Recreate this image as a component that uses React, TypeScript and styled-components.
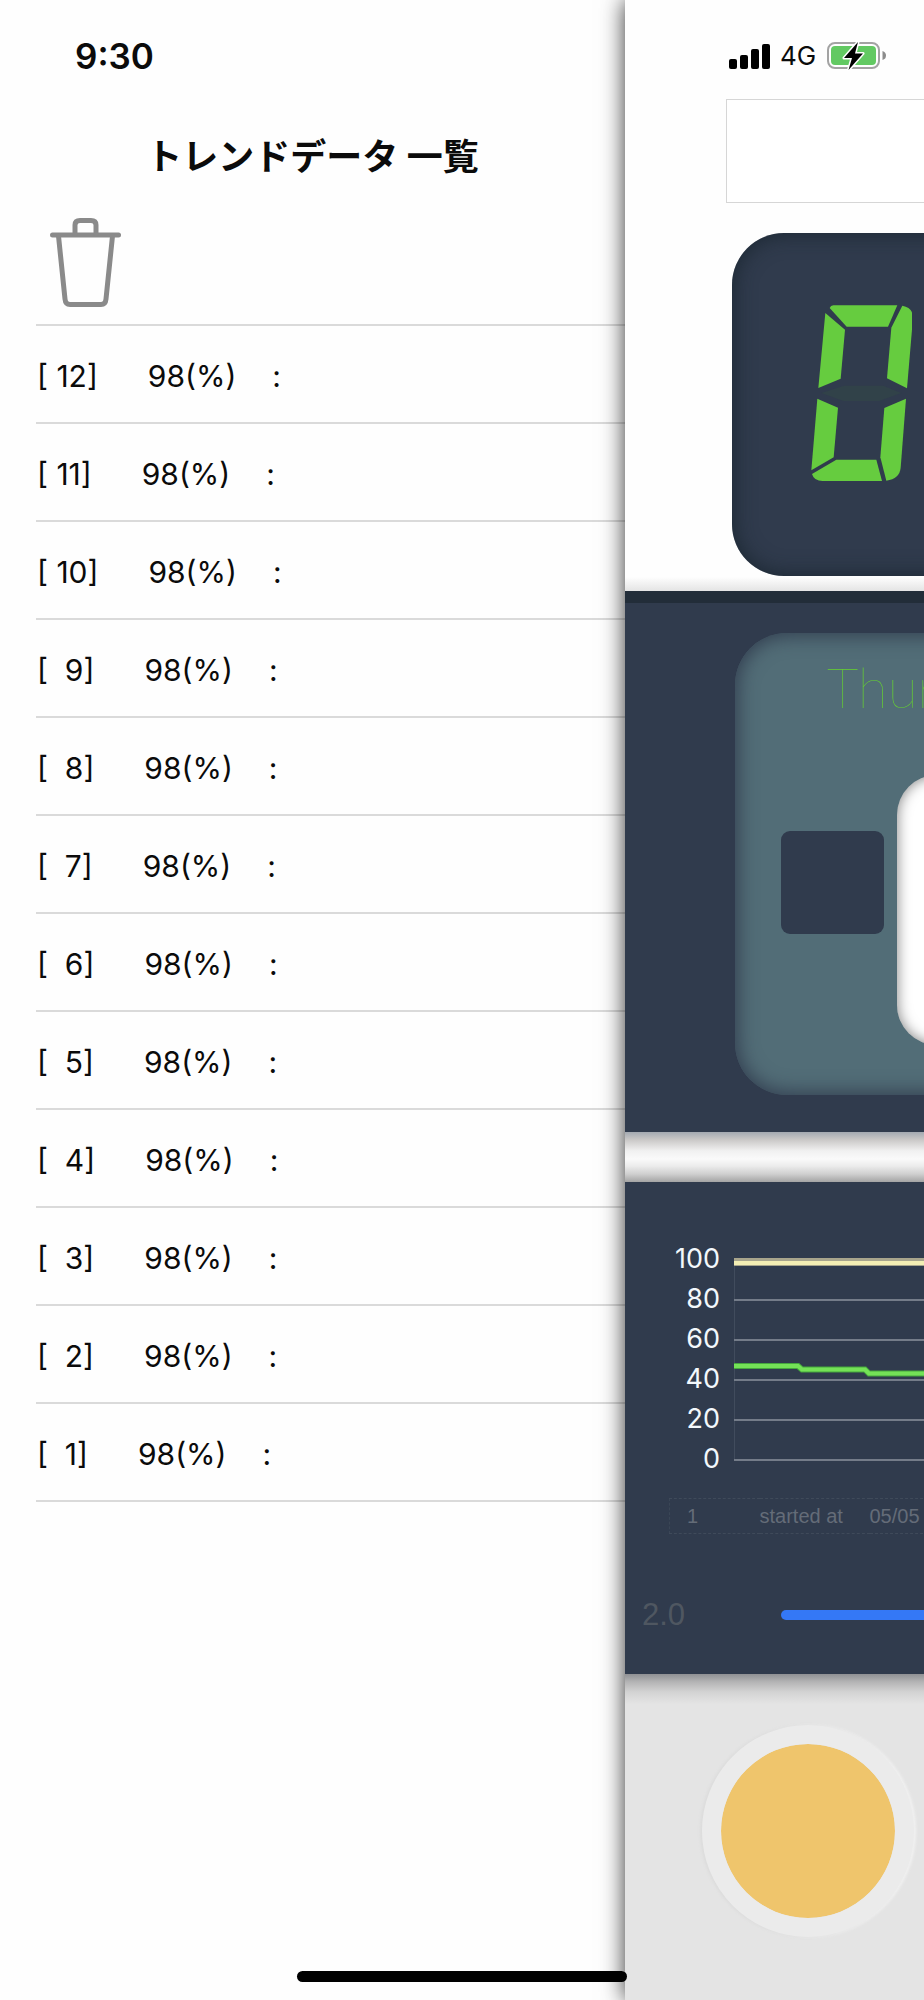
import React from "react";
import styled, { createGlobalStyle } from "styled-components";

const navy = "#303b4d";
const green = "#66cc3f";

const GlobalStyle = createGlobalStyle`
  *, *::before, *::after { box-sizing: border-box; }
  body {
    margin: 0;
    background: #fefefe;
    color: #0b0b0b;
    font-family: Inter, "Noto Sans CJK JP", sans-serif;
  }
`;

const Screen = styled.div`
  position: relative;
  display: flex;
  min-height: 100vh;
  overflow: hidden;
`;

/* Drawer with the trend list */
const Drawer = styled.aside`
  flex: 1;
  min-width: 0;
  padding: 34px 0 0 36px;
  background: #fefefe;
`;

const Clock = styled.time`
  display: block;
  padding-left: 39px;
  font-size: 35px;
  font-weight: 600;
  line-height: 44px;
`;

const Title = styled.h1`
  margin: 54px 36px 0 0;
  font-size: 36px;
  font-weight: 700;
  line-height: 50px;
  text-align: center;
  white-space: nowrap;
`;

const IconButton = styled.button`
  display: block;
  margin: 33px 0 0 12px;
  padding: 0;
  border: 0;
  background: none;
  line-height: 0;
`;

const TrendList = styled.ol`
  margin: 14px 0 0;
  padding: 0;
  list-style: none;
  border-top: 2px solid #dadada;
`;

const TrendRow = styled.li`
  display: flex;
  align-items: center;
  height: 98px;
  padding: 3px 0 0 1px;
  border-bottom: 2px solid #dadada;
  font-size: 30px;
  line-height: 40px;
  white-space: pre;
`;

const TrendValue = styled.span`
  margin: 0 36px 0 50px;
`;

/* Main page, slid to the right of the drawer */
const Page = styled.main`
  position: relative;
  flex: 0 0 299px;
  display: flex;
  flex-direction: column;
  min-width: 0;
  overflow: hidden;
  background: #e4e4e4;
`;

const PageFrame = styled.div`
  position: relative;
  display: flex;
  box-shadow: 0 0 22px rgba(0, 0, 0, 0.8);
`;

const Top = styled.header`
  width: 100vw;
  height: 591px;
  padding: 40px 0 0 101px;
  background: linear-gradient(to top, #e4e4e4, #fefefe 14px);
`;

const StatusIcons = styled.div`
  display: flex;
  align-items: center;
  height: 32px;
  padding-left: 3px;
  font-size: 26px;
  line-height: 32px;
`;

const Network = styled.span`
  margin: 0 11px 0 9px;
`;

const MessageBox = styled.input`
  display: block;
  width: calc(100vw - 202px);
  height: 104px;
  margin-top: 27px;
  padding: 0 16px;
  border: 1px solid #d6d6d6;
  background: #fff;
  font: inherit;
`;

const Lcd = styled.div`
  width: calc(100vw - 214px);
  height: 343px;
  margin: 30px 0 0 6px;
  padding: 70px 0 0 76px;
  border-radius: 52px;
  background: ${navy};
  box-shadow: inset 0 0 22px rgba(20, 32, 40, 0.8);
`;

const DateSection = styled.section`
  width: 100vw;
  height: 541px;
  padding: 30px 110px 0;
  border-top: 12px solid #222d39;
  background: ${navy};
`;

const DateCard = styled.div`
  height: 462px;
  padding: 21px 46px 0;
  border-radius: 52px;
  background: #526d77;
  box-shadow: inset 0 0 20px 2px ${navy};
`;

const Weekday = styled.h2`
  margin: 0 0 0 46px;
  color: #66d42f;
  font-family: Lato, Roboto, sans-serif;
  font-size: 55px;
  font-weight: 100;
  line-height: 66px;
  white-space: nowrap;
`;

const DateBody = styled.div`
  display: flex;
  align-items: center;
  gap: 13px;
  height: 270px;
  margin-top: 55px;
`;

const Tile = styled.div`
  flex: 0 0 103px;
  height: 103px;
  margin-bottom: 56px;
  border-radius: 9px;
  background: ${navy};
`;

const Face = styled.div`
  flex: 1;
  height: 270px;
  border-radius: 40px;
  background: #fff;
  box-shadow: inset 0 0 14px rgba(0, 0, 0, 0.5);
`;

const Divider = styled.div`
  height: 50px;
  background: linear-gradient(#a3a9b1, #cbc9c8 8px, #f1f1f1 19px, #fafafa 27px, #ececec 34px, #cfcfcf 42px, #a4a4a4);
`;

const ChartSection = styled.section`
  width: 100vw;
  height: 492px;
  padding: 57px 0 0 17px;
  background: ${navy};
`;

const Chart = styled.div`
  display: flex;
  align-items: flex-start;
  gap: 14px;
`;

const Axis = styled.ul`
  width: 78px;
  margin: 0;
  padding: 0;
  list-style: none;
  color: #f3f8fc;
  font-size: 27px;
  line-height: 40px;
  text-align: right;
`;

const Plot = styled.svg`
  display: block;
  flex: none;
`;

const Log = styled.table`
  width: 700px;
  margin: 19px 0 0 27px;
  border-collapse: collapse;
  table-layout: fixed;
  border-top: 1px dashed #3f4a5a;
  border-bottom: 1px dashed #3f4a5a;
  border-left: 1px dashed #3a4656;
  color: #646c78;
  font-family: "Liberation Sans", sans-serif;
  font-size: 20px;
  line-height: 34px;
`;

const LogCell = styled.td<{ $width?: number; $indent?: number }>`
  width: ${(p) => (p.$width ? `${p.$width}px` : "auto")};
  padding: 0 0 0 ${(p) => p.$indent ?? 0}px;
  white-space: nowrap;
`;

const SliderRow = styled.div`
  display: flex;
  align-items: center;
  height: 40px;
  margin-top: 61px;
`;

const SliderLabel = styled.label`
  width: 139px;
  color: #4f5761;
  font-family: "Liberation Sans", sans-serif;
  font-size: 31px;
  line-height: 40px;
`;

const Slider = styled.input`
  appearance: none;
  width: calc(100vw - 300px);
  height: 10px;
  margin: 0;
  border-radius: 5px;
  background: #3478f6;

  &::-webkit-slider-thumb {
    appearance: none;
    width: 40px;
    height: 40px;
    border-radius: 50%;
    background: #fff;
  }
`;

const Controls = styled.footer`
  flex: 1;
  width: 100vw;
  padding: 51px 0 0 77px;
  background: linear-gradient(#8f9094, #b4b4b5 8px, #d3d3d3 18px, #e4e4e4 30px);
`;

const RoundButton = styled.button`
  display: block;
  width: 212px;
  height: 212px;
  padding: 0;
  border: 19px solid #ebebeb;
  border-radius: 50%;
  background: #efc56c;
  background-clip: padding-box;
  box-shadow: -2px 0 3px #dcdcdc, 2px 0 3px #f2f2f2;
`;

const HomeBar = styled.div`
  position: absolute;
  bottom: 18px;
  left: 50%;
  width: 330px;
  height: 11px;
  margin-left: -165px;
  border-radius: 6px;
  background: #000;
`;

const TrashIcon = () => (
  <svg width="76" height="95" viewBox="0 0 76 95" fill="none" stroke="#8a8a8a" strokeWidth="5" strokeLinecap="round" strokeLinejoin="round" aria-hidden="true">
    <path d="M4.500 20H70.500" />
    <path d="M27 19V10Q27 5.500 32 5.500H43Q48 5.500 48 10V19" />
    <path d="M10.500 21L17 84Q17.500 89.500 22 89.500H53Q57.500 89.500 58 84L64.500 21" />
  </svg>
);

const SignalIcon = () => (
  <svg width="42" height="26" viewBox="0 0 42 26" fill="#000" aria-hidden="true">
    <rect x="0" y="16" width="8" height="10" rx="2" />
    <rect x="11" y="12" width="8" height="14" rx="2" />
    <rect x="22" y="6" width="8" height="20" rx="2" />
    <rect x="33" y="1" width="8" height="25" rx="2" />
  </svg>
);

const BatteryIcon = () => (
  <svg width="60" height="30" viewBox="0 0 60 30" aria-hidden="true">
    <rect x="1" y="2" width="51" height="25" rx="7" fill="none" stroke="#a3a3a3" strokeWidth="2" />
    <rect x="4" y="5" width="45" height="19" rx="4" fill="#62c962" />
    <path d="M55.500 10Q59 11 59 14.500T55.500 19Z" fill="#8c8c8c" />
    <path d="M31 1L17 17H25L21.500 29L36 12.500H28Z" fill="#000" stroke="#fff" strokeWidth="3" paintOrder="stroke" strokeLinejoin="round" />
  </svg>
);

/* A slanted seven-segment zero; the middle bar is unlit. */
const SegmentZero = () => (
  <svg width="104" height="180" viewBox="0 0 312 540" fill={green} role="img" aria-label="0">
    <path d="M65 15Q68 7 76 7H268L240 71H116Z" />
    <path d="M52 30L111 80L98 227L31 255Z" />
    <path d="M283 8Q315 14 315 44L297 256L237 226L250 74Z" />
    <path d="M28 287L90 314L77 463L10 502Z" />
    <path d="M294 287L229 315L217 463L235 533Q275 527 278 494Z" />
    <path d="M12 513L85 470H205L222 534H44Q18 534 12 513Z" />
    <path d="M40 270L108 248H226L280 270L214 294H106Z" fill="#314249" />
  </svg>
);

const trend = Array.from({ length: 12 }, (_, i) => 12 - i);
const ticks = [100, 80, 60, 40, 20, 0];

export default function App() {
  return (
    <>
      <GlobalStyle />
      <Screen>
        <Drawer>
          <Clock>9:30</Clock>
          <Title>トレンドデータ 一覧</Title>
          <IconButton type="button" aria-label="削除">
            <TrashIcon />
          </IconButton>
          <TrendList>
            {trend.map((n) => (
              <TrendRow key={n}>
                <span>{`[ ${String(n).padStart(2, " ")}]`}</span>
                <TrendValue>98(%)</TrendValue>
                <span>:</span>
              </TrendRow>
            ))}
          </TrendList>
        </Drawer>
        <PageFrame>
          <Page>
            <Top>
              <StatusIcons>
                <SignalIcon />
                <Network>4G</Network>
                <BatteryIcon />
              </StatusIcons>
              <MessageBox type="text" aria-label="メッセージ" />
              <Lcd>
                <SegmentZero />
              </Lcd>
            </Top>
            <DateSection>
              <DateCard>
                <Weekday>Thur</Weekday>
                <DateBody>
                  <Tile />
                  <Face />
                </DateBody>
              </DateCard>
            </DateSection>
            <Divider />
            <ChartSection>
              <Chart>
                <Axis>
                  {ticks.map((t) => (
                    <li key={t}>{t}</li>
                  ))}
                </Axis>
                <Plot width="620" height="240" viewBox="0 0 620 240" fill="none" aria-hidden="true">
                  <path d="M0.500 20V220" stroke="#414c5d" />
                  {ticks.slice(1).map((t) => (
                    <path key={t} d={`M0 ${221 - t * 2}H620`} stroke="#747c89" strokeWidth="2" />
                  ))}
                  <path d="M0 23H620" stroke="#a8a58c" strokeWidth="8" />
                  <path d="M0 24H620" stroke="#f3eeb4" strokeWidth="4" />
                  <path d="M0 127H64L68 130.500H131L135 134.500H620" stroke="#45a83d" strokeWidth="6" />
                  <path d="M0 127H64L68 130.500H131L135 134.500H620" stroke="#74e257" strokeWidth="4" />
                </Plot>
              </Chart>
              <Log>
                <tbody>
                  <tr>
                    <LogCell $width={90} $indent={17}>1</LogCell>
                    <LogCell $width={110}>started at</LogCell>
                    <LogCell>05/05</LogCell>
                  </tr>
                </tbody>
              </Log>
              <SliderRow>
                <SliderLabel htmlFor="scale">2.0</SliderLabel>
                <Slider id="scale" type="range" min="0" max="2" step="0.1" defaultValue="2" />
              </SliderRow>
            </ChartSection>
            <Controls>
              <RoundButton type="button" aria-label="開始" />
            </Controls>
          </Page>
        </PageFrame>
        <HomeBar />
      </Screen>
    </>
  );
}
